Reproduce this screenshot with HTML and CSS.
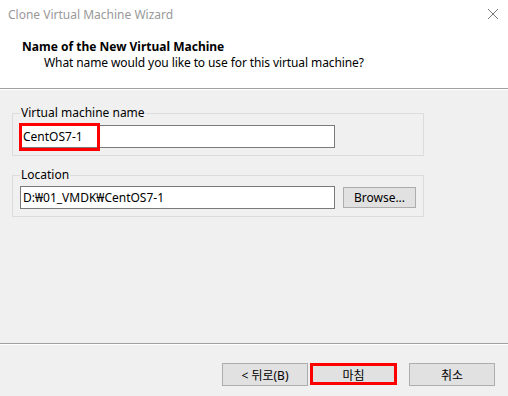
FILE: index.html
```html
<!DOCTYPE html>
<html>
<head>
    <meta charset="UTF-8">
    <title>Clone Virtual Machine Wizard</title>
    <link rel="stylesheet" href="styles.css">
</head>
<body>
<div class="window">
    <div class="titlebar">
        <span class="title">Clone Virtual Machine Wizard</span>
        <svg class="close" width="12" height="12" viewBox="0 0 12 12">
            <path d="M1 1 L11 11 M11 1 L1 11" stroke="#7a7a7a" stroke-width="1" fill="none"/>
        </svg>
    </div>

    <div class="header">
        <div class="heading">Name of the New Virtual Machine</div>
        <div class="subheading">What name would you like to use for this virtual machine?</div>
    </div>

    <div class="separator"></div>

    <div class="content">
        <fieldset class="group group-name">
            <legend>Virtual machine name</legend>
            <div class="field">
                <div class="text-box">CentOS7-1</div>
                <span class="mark"></span>
            </div>
        </fieldset>

        <fieldset class="group group-location">
            <legend>Location</legend>
            <div class="field">
                <div class="text-box">D:₩01_VMDK₩CentOS7-1</div>
                <button class="button browse">Browse...</button>
            </div>
        </fieldset>
    </div>

    <div class="separator"></div>

    <div class="footer">
        <button class="button">&lt; 뒤로(B)</button>
        <button class="button finish">마침</button>
        <button class="button cancel">취소</button>
    </div>
</div>
</body>
</html>
```

FILE: styles.css
```css
body {
    margin: 0;
    padding: 0;
    font-family: "Noto Sans", "Noto Sans CJK KR", sans-serif;
    font-size: 12px;
    color: #000000;
}

.window {
    width: 508px;
    height: 396px;
    background-color: #F0F0F0;
    display: flex;
    flex-direction: column;
}

.titlebar {
    height: 30px;
    background-color: #FFFFFF;
    display: flex;
    align-items: center;
    justify-content: space-between;
    padding: 0 9px 0 8px;
}

.title {
    color: #999999;
    line-height: 16px;
}

.close {
    margin-top: -2px;
}

.header {
    height: 49px;
    background-color: #FFFFFF;
    padding: 9px 0 0 22px;
}

.heading {
    font-weight: bold;
    line-height: 16px;
}

.subheading {
    line-height: 16px;
    margin-left: 22px;
    letter-spacing: -0.1px;
}

.separator {
    height: 1px;
    background-color: #A0A0A0;
    border-bottom: 1px solid #FFFFFF;
}

.content {
    flex: 1;
    padding: 15px 0 0 12px;
}

.group {
    width: 403px;
    margin: 0;
    padding: 0 0 7px 7px;
    border: 1px solid #DCDCDC;
}

.group legend {
    padding: 0 1px;
    margin-left: 0;
    line-height: 16px;
}

.group-location {
    margin-top: 11px;
}

.field {
    position: relative;
    display: flex;
    align-items: center;
    margin-top: 4px;
}

.group-location .field {
    margin-top: 3px;
}

.text-box {
    width: 311px;
    height: 21px;
    background-color: #FFFFFF;
    border: 1px solid #7A7A7A;
    padding-left: 2px;
    line-height: 21px;
}

.mark {
    position: absolute;
    left: -1px;
    top: -2px;
    width: 75px;
    height: 22px;
    border: 3px solid #FF0000;
}

.button {
    font-family: inherit;
    font-size: 12px;
    color: #000000;
    background-color: #E1E1E1;
    border: 1px solid #ADADAD;
    height: 23px;
    width: 86px;
    padding: 0;
}

.browse {
    width: 73px;
    height: 21px;
    margin-left: 8px;
}

.footer {
    height: 51px;
    display: flex;
    justify-content: flex-end;
    align-items: flex-start;
    padding: 18px 13px 0 0;
    box-sizing: border-box;
}

.finish {
    margin-left: 2px;
    width: 87px;
    height: 22px;
    border: 3px solid #FF0000;
}

.cancel {
    margin-left: 12px;
}
```
